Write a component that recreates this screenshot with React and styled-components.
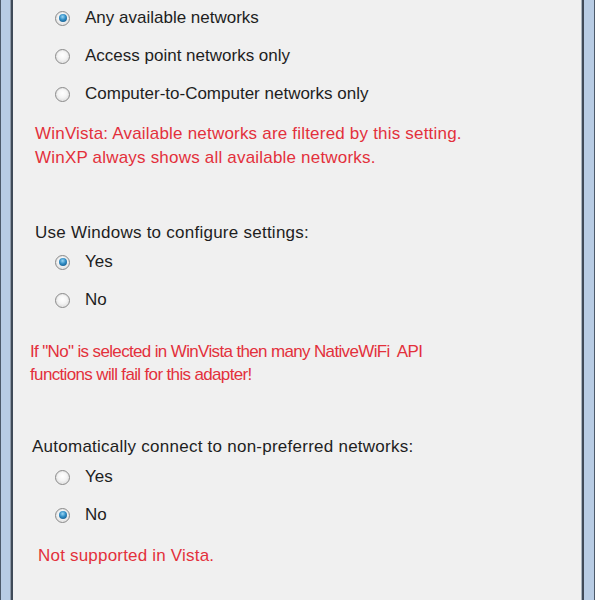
import React from "react";
import styled, { createGlobalStyle } from "styled-components";

const Global = createGlobalStyle`
  html, body { margin: 0; padding: 0; background: #f0f0f0; }
  body { font-family: "Liberation Sans", Arial, sans-serif; }
`;

const Window = styled.div`
  display: flex;
  width: 595px;
  height: 600px;
  overflow: hidden;
`;

const Frame = styled.div`
  flex: 0 0 ${(p) => p.$w}px;
  background: ${(p) =>
    p.$side === "left"
      ? "linear-gradient(to right, #4d5a6a 0 1px, #b8cce4 1px 10px, #8d9aaa 10px 11px, #3f4a58 11px 13px)"
      : "linear-gradient(to right, #a9b3bd 0 1px, #3f4a58 1px 3px, #b8cce4 3px 13px, #4d5a6a 13px 14px)"};
`;

const Panel = styled.div`
  flex: 1;
  background: #f0f0f0;
  display: flex;
  flex-direction: column;
  color: #1e1e1e;
  font-size: 17px;
`;

const Row = styled.label`
  display: flex;
  align-items: center;
  height: 38px;
  padding-left: 42px;
  gap: 15px;
  margin-top: ${(p) => p.$mt || 0}px;
`;

const Circle = styled.span`
  width: 15px;
  height: 15px;
  border-radius: 50%;
  box-sizing: border-box;
  border: 1px solid #8a8a8a;
  background: radial-gradient(circle at 50% 40%, #ffffff 0%, #f4f4f4 45%, #d0d0d0 100%);
  box-shadow: inset 0 0 0 1px #e8e8e8;
  display: flex;
  align-items: center;
  justify-content: center;
  flex: none;
`;

const Dot = styled.span`
  width: 8px;
  height: 8px;
  border-radius: 50%;
  background: radial-gradient(circle at 45% 35%, #9ad6f4 0%, #2f8cc4 45%, #0f4a78 100%);
`;

const Label = styled.div`
  line-height: 20px;
  letter-spacing: 0.25px;
  padding-left: ${(p) => p.$indent}px;
  margin-top: ${(p) => p.$mt || 0}px;
`;

const Warning = styled.div`
  color: #e3303c;
  line-height: ${(p) => p.$lh || 24}px;
  letter-spacing: ${(p) => p.$ls ?? 0.2}px;
  padding-left: ${(p) => p.$indent}px;
  margin-top: ${(p) => p.$mt || 0}px;
`;

const Radio = ({ checked, children, mt }) => (
  <Row $mt={mt}>
    <Circle>{checked && <Dot />}</Circle>
    <span>{children}</span>
  </Row>
);

export default function App() {
  return (
    <>
      <Global />
      <Window>
        <Frame $side="left" $w={13} />
        <Panel>
          <Radio checked mt={-1}>Any available networks</Radio>
          <Radio>Access point networks only</Radio>
          <Radio>Computer-to-Computer networks only</Radio>
          <Warning $indent={22} $mt={9}>
            WinVista: Available networks are filtered by this setting.
            <br />
            WinXP always shows all available networks.
          </Warning>
          <Label $indent={22} $mt={53}>Use Windows to configure settings:</Label>
          <Radio checked>Yes</Radio>
          <Radio>No</Radio>
          <Warning $indent={17} $mt={21} $lh={23} $ls={-0.65}>
            If "No" is selected in WinVista then many NativeWiFi&nbsp; API
            <br />
            functions will fail for this adapter!
          </Warning>
          <Label $indent={19} $mt={51}>Automatically connect to non-preferred networks:</Label>
          <Radio mt={1}>Yes</Radio>
          <Radio checked>No</Radio>
          <Warning $indent={25} $mt={10}>Not supported in Vista.</Warning>
        </Panel>
        <Frame $side="right" $w={14} />
      </Window>
    </>
  );
}
